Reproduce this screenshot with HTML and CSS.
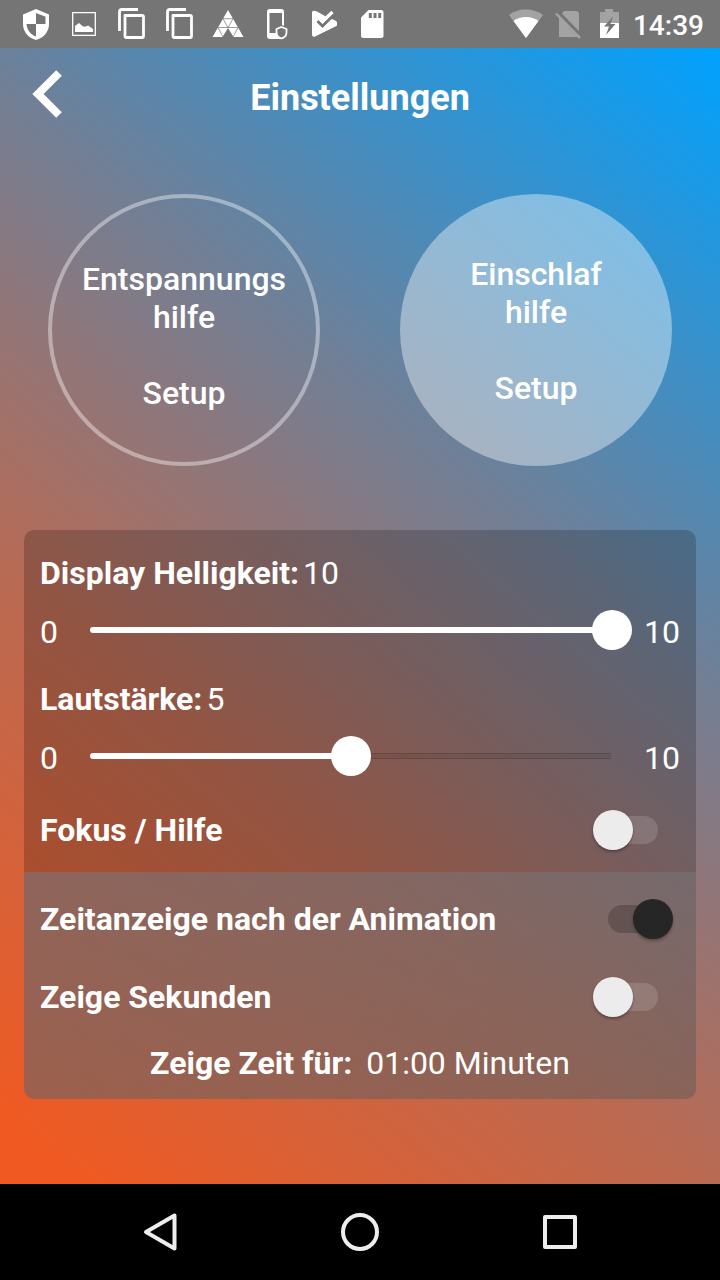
FILE: index.html
```html
<!DOCTYPE html>
<html lang="de">
<head>
<meta charset="utf-8">
<meta name="viewport" content="width=device-width, initial-scale=1">
<title>Einstellungen</title>
<link rel="stylesheet" href="styles.css">
</head>
<body>
<div class="statusbar">
  <div class="notifications">
    <svg class="icon" viewBox="0 0 48 48"><path fill="#fff" fill-rule="evenodd" d="M24 9l13 5.500V24c0 8-5.500 14-13 16-7.500-2-13-8-13-16v-9.500zM24 13v11h9.500v-7.200zM24 24h-9.500c.5 6 4 10.500 9.500 12.500z"/></svg>
    <svg class="icon" viewBox="0 0 48 48"><path fill="none" stroke="#fff" stroke-width="1.300" d="M12.700 12.700h22.600v22.600H12.700z"/><path fill="#fff" d="M15 32v-6l4-3 4 3.500h3l2-1 5 3.500v3z"/></svg>
    <svg class="icon" viewBox="0 0 48 48"><path fill="none" stroke="#fff" stroke-width="2.800" stroke-linejoin="round" d="M11.500 31V12q0-2.500 2.500-2.500h16M17 15.500h17q1.500 0 1.500 1.500v19q0 1.500-1.500 1.500H18.500q-1.500 0-1.500-1.500z"/></svg>
    <svg class="icon" viewBox="0 0 48 48"><path fill="none" stroke="#fff" stroke-width="2.800" stroke-linejoin="round" d="M11.500 31V12q0-2.500 2.500-2.500h16M17 15.500h17q1.500 0 1.500 1.500v19q0 1.500-1.500 1.500H18.500q-1.500 0-1.500-1.500z"/></svg>
    <svg class="icon" viewBox="0 0 48 48"><path fill="#fff" d="M24 10l15.500 27H29.500L24 28l-5.500 9H8.500z"/><path stroke="#757575" stroke-width=".7" fill="none" d="M19 18.700h10M14 27.500h20M19 18.700l5 9 5-9M14 27.500l5 9.500M34 27.500L29 37"/></svg>
    <svg class="icon" viewBox="0 0 48 48"><path fill="#fff" fill-rule="evenodd" d="M18 9h11q3 0 3 3v14l-2-1V13H17.500v20H27q1 4 4 5.500l-1 .5H18q-3 0-3-3V12q0-3 3-3z"/><path fill="#757575" stroke="#fff" stroke-width="1.800" d="M29.500 27l5 2v3.500c0 3-2 5-5 6-3-1-5-3-5-6V29z"/></svg>
    <svg class="icon" viewBox="0 0 48 48"><path fill="#fff" d="M13 11q2-.5 4 .5l8 4.500 7 3.500 5 2.200v4L15 36.500q-3 1-3-2v-22q0-1.500 1-1.500zM32 19l4 2 1 3.500-6-2z"/><path fill="none" stroke="#757575" stroke-width="3" d="M17.500 21l5 5L33 15.500"/><path fill="none" stroke="#fff" stroke-width="3.200" d="M19.500 18.500l3 3L32.500 12"/></svg>
    <svg class="icon" viewBox="0 0 48 48"><path fill="#fff" d="M20.500 10H33q2.500 0 2.500 2.500v23Q35.500 38 33 38H15.500q-2.500 0-2.500-2.500V17.500z"/><path stroke="#757575" stroke-width="3" d="M22.300 13v5M27 13v5M31.700 13v5"/></svg>
  </div>
  <div class="system">
    <svg class="icon-s" viewBox="0 0 40 48"><path fill="#a3a3a3" d="M17 38L0 15Q7 9.500 17 9.500T34 15z"/><path fill="#fff" d="M17 38L4.500 21Q10 17 17 17t12.500 4z"/></svg>
    <svg class="icon-s" viewBox="0 0 40 48"><path fill="#a3a3a3" d="M15 11h12q3 0 3 3v23H10V17z"/><path stroke="#757575" stroke-width="5" d="M9 13l24 25"/><path stroke="#a3a3a3" stroke-width="2.500" d="M7 13.500l24 24.500"/></svg>
    <svg class="icon-s" viewBox="0 0 40 48"><path fill="#a3a3a3" d="M16 9h8v3h6v11H11V12h5z"/><path fill="#fff" d="M11 23h19v15H11z"/><path fill="#757575" d="M24 16.500l-9 10h5l-3 8.500 9.500-11h-5z"/></svg>
    <span class="clock">14:39</span>
  </div>
</div>

<div class="app">
  <header class="header">
    <button class="back" aria-label="Zurück"><svg viewBox="0 0 30 48" width="30" height="48"><path fill="none" stroke="#fff" stroke-width="8" d="M27 3L6 24l21 21"/></svg></button>
    <h1 class="title">Einstellungen</h1>
  </header>

  <div class="modes">
    <button class="mode mode-outline">Entspannungs<br>hilfe<br><br>Setup</button>
    <button class="mode mode-filled">Einschlaf<br>hilfe<br><br>Setup</button>
  </div>

  <main class="panel">
    <section class="controls">
      <div class="setting">
        <label class="label" for="brightness">Display Helligkeit:</label>
        <output for="brightness">10</output>
      </div>
      <div class="slider-row">
        <span class="bound">0</span>
        <div class="slider" style="--fill: 100%"><input id="brightness" type="range" min="0" max="10" value="10"></div>
        <span class="bound">10</span>
      </div>
      <div class="setting">
        <label class="label" for="volume">Lautstärke:</label>
        <output for="volume">5</output>
      </div>
      <div class="slider-row">
        <span class="bound">0</span>
        <div class="slider" style="--fill: 50%"><input id="volume" type="range" min="0" max="10" value="5"></div>
        <span class="bound">10</span>
      </div>
      <div class="switch-row">
        <label class="label" for="focus">Fokus / Hilfe</label>
        <input class="switch" id="focus" type="checkbox">
      </div>
    </section>
    <section class="time">
      <div class="switch-row">
        <label class="label" for="showtime">Zeitanzeige nach der Animation</label>
        <input class="switch" id="showtime" type="checkbox" checked>
      </div>
      <div class="switch-row switch-row-compact">
        <label class="label" for="seconds">Zeige Sekunden</label>
        <input class="switch" id="seconds" type="checkbox">
      </div>
      <div class="duration"><span class="label">Zeige Zeit für:</span><span>01:00 Minuten</span></div>
    </section>
  </main>
</div>

<nav class="navbar">
  <button aria-label="Zurück"><svg viewBox="0 0 48 48"><path d="M38.500 7.500v33L10 24z"/></svg></button>
  <button aria-label="Startseite"><svg viewBox="0 0 48 48"><circle cx="24" cy="24" r="17"/></svg></button>
  <button aria-label="Übersicht"><svg viewBox="0 0 48 48"><path d="M9 9h30v30H9z"/></svg></button>
</nav>
</body>
</html>
```
FILE: styles.css
```css
* {
  box-sizing: border-box;
}

body {
  margin: 0;
  min-height: 100vh;
  display: flex;
  flex-direction: column;
  font-family: Roboto, "Noto Sans", sans-serif;
  font-size: 32px;
  line-height: 38px;
  color: #fff;
  background: #000;
}

button {
  padding: 0;
  border: 0;
  background: none;
  color: inherit;
  font: inherit;
}

.statusbar {
  display: flex;
  justify-content: space-between;
  height: 48px;
  padding: 0 16px 0 12px;
  background: #757575;
}

.notifications,
.system {
  display: flex;
  align-items: center;
}

.icon {
  width: 48px;
  height: 48px;
}

.icon-s {
  width: 40px;
  height: 48px;
}

.clock {
  margin-left: 4px;
  padding-top: 3px;
  font-size: 28px;
  font-weight: 500;
}

.app {
  flex: 1;
  padding-bottom: 84px;
  background: linear-gradient(40deg, #f05a22 4%, #b96a53 35%, #727f95 63%, #00a2ff 100%);
}

.header {
  display: grid;
  grid-template-columns: 30px 1fr 30px;
  align-items: center;
  height: 98px;
  padding: 0 32px;
}

.back {
  height: 54px;
}

.title {
  margin: 0;
  padding-top: 2px;
  font-size: 36px;
  font-weight: 700;
  text-align: center;
}

.modes {
  display: grid;
  grid-template-columns: 1fr 1fr;
  justify-items: center;
  padding: 48px 8px 64px;
}

.mode {
  width: 272px;
  height: 272px;
  border-radius: 50%;
  font-weight: 500;
}

.mode-outline {
  padding-top: 12px;
  border: 4px solid rgba(255, 255, 255, 0.4);
}

.mode-filled {
  padding-top: 2px;
  background: rgba(255, 255, 255, 0.4);
}

.panel {
  margin: 0 24px;
  border-radius: 10px;
  overflow: hidden;
}

.controls {
  padding: 24px 16px 0;
  background: rgba(0, 0, 0, 0.2);
}

.time {
  padding: 5px 16px 17px;
  background: linear-gradient(135deg, rgba(72, 104, 124, 0.5), rgba(98, 90, 87, 0.5));
}

.label {
  font-weight: 700;
}

.setting {
  display: flex;
  gap: 4px;
}

.slider-row {
  display: grid;
  grid-template-columns: 30px 1fr 48px;
  align-items: center;
  margin: 17px 0 29px;
}

.bound {
  padding-top: 4px;
}

.bound:last-child {
  text-align: right;
}

.slider {
  position: relative;
  height: 40px;
}

.slider::before {
  content: "";
  position: absolute;
  inset: 17px 20px;
  border-radius: 3px;
  background: linear-gradient(to right, #fff var(--fill), transparent var(--fill)), linear-gradient(rgba(0, 0, 0, 0.2) 1px, rgba(0, 0, 0, 0.08) 1px 5px, rgba(0, 0, 0, 0.2) 5px);
}

.slider input {
  position: relative;
  display: block;
  width: 100%;
  height: 40px;
  margin: 0;
  appearance: none;
  background: none;
}

.slider input::-webkit-slider-thumb {
  appearance: none;
  width: 40px;
  height: 40px;
  border-radius: 50%;
  background: #fff;
}

.switch-row {
  display: flex;
  align-items: center;
  justify-content: space-between;
  height: 84px;
  padding-right: 7px;
}

.controls .switch-row {
  margin-top: -18px;
}

.switch-row-compact {
  height: 72px;
}

.switch {
  display: flex;
  align-items: center;
  width: 80px;
  height: 40px;
  margin: 0;
  appearance: none;
  background: linear-gradient(transparent, transparent);
}

.switch::before {
  content: "";
  width: 50px;
  height: 28px;
  margin-left: 15px;
  border-radius: 14px;
  background: rgba(255, 255, 255, 0.14);
}

.switch::after {
  content: "";
  width: 40px;
  height: 40px;
  margin-left: -65px;
  border-radius: 50%;
  background: #ececec;
  box-shadow: 0 2px 3px rgba(0, 0, 0, 0.3);
}

.switch:checked::before {
  background: rgba(0, 0, 0, 0.2);
}

.switch:checked::after {
  margin-left: -25px;
  background: #262626;
}

.duration {
  display: flex;
  justify-content: center;
  gap: 14px;
  margin-top: 11px;
}

.navbar {
  display: flex;
  justify-content: center;
  align-items: center;
  gap: 152px;
  height: 96px;
  background: #000;
}

.navbar button {
  width: 48px;
  height: 48px;
}

.navbar svg {
  display: block;
  fill: none;
  stroke: #eee;
  stroke-width: 4;
  stroke-linejoin: round;
}
```
